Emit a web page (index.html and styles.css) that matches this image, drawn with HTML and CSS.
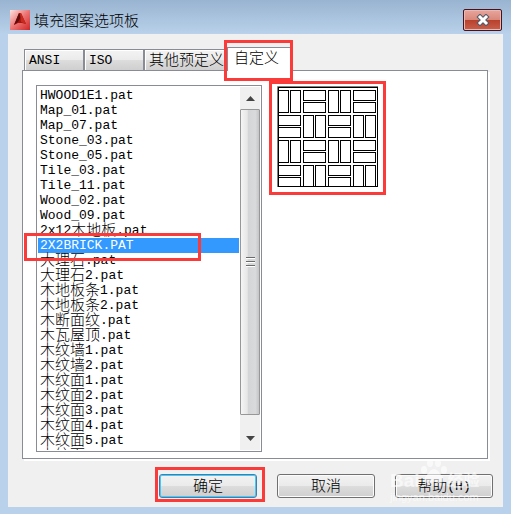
FILE: index.html
```html
<!DOCTYPE html>
<html lang="zh-CN">
<head>
    <meta charset="UTF-8">
    <meta name="viewport" content="width=device-width, initial-scale=1.0">
    <title>填充图案选项板</title>
    <link rel="stylesheet" href="styles.css">
</head>
<body>

    <div class="titlebar">
        <svg class="app-icon" viewBox="0 0 20 20" aria-hidden="true">
            <defs>
                <linearGradient id="iconBg" x1="0" y1="0" x2="1" y2="1">
                    <stop offset="0" stop-color="#fbe4e4"/>
                    <stop offset="0.5" stop-color="#ec7474"/>
                    <stop offset="1" stop-color="#d02424"/>
                </linearGradient>
            </defs>
            <rect width="20" height="20" fill="url(#iconBg)"/>
            <path d="M9 3h2l5 11-4-1H8l-4 2z" fill="#a81410"/>
            <path d="M9 3l-5 12 4-3 3-5z" fill="#5c0d0d"/>
            <path d="M10 3h1l5 11-5-2z" fill="#c82a20"/>
        </svg>
        <h1>填充图案选项板</h1>
        <button type="button" class="close-btn" aria-label="关闭">
            <svg viewBox="0 0 14 12" aria-hidden="true">
                <path d="M4 3l6 6M10 3l-6 6" stroke="#525b6b" stroke-width="5" stroke-linecap="square"/>
                <path d="M4 3l6 6M10 3l-6 6" stroke="#fff" stroke-width="3" stroke-linecap="square"/>
            </svg>
        </button>
    </div>

    <form class="dialog">
        <div class="tabs" role="tablist">
            <button type="button" class="tab" role="tab">ANSI</button>
            <button type="button" class="tab" role="tab">ISO</button>
            <button type="button" class="tab tab-wide" role="tab"><span class="cn">其他预定义</span></button>
            <button type="button" class="tab active marked" role="tab" aria-selected="true"><span class="cn">自定义</span></button>
        </div>

        <div class="panel">
            <div class="listbox">
                <div class="items">
                    <label><input type="radio" name="pat">HWOOD1E1.pat</label>
                    <label><input type="radio" name="pat">Map_01.pat</label>
                    <label><input type="radio" name="pat">Map_07.pat</label>
                    <label><input type="radio" name="pat">Stone_03.pat</label>
                    <label><input type="radio" name="pat">Stone_05.pat</label>
                    <label><input type="radio" name="pat">Tile_03.pat</label>
                    <label><input type="radio" name="pat">Tile_11.pat</label>
                    <label><input type="radio" name="pat">Wood_02.pat</label>
                    <label><input type="radio" name="pat">Wood_09.pat</label>
                    <label><input type="radio" name="pat">2x12<span class="cn">木地板</span>.pat</label>
                    <label><input type="radio" name="pat" checked>2X2BRICK.PAT</label>
                    <label><input type="radio" name="pat"><span class="cn">大理石</span>.pat</label>
                    <label><input type="radio" name="pat"><span class="cn">大理石</span>2.pat</label>
                    <label><input type="radio" name="pat"><span class="cn">木地板条</span>1.pat</label>
                    <label><input type="radio" name="pat"><span class="cn">木地板条</span>2.pat</label>
                    <label><input type="radio" name="pat"><span class="cn">木断面纹</span>.pat</label>
                    <label><input type="radio" name="pat"><span class="cn">木瓦屋顶</span>.pat</label>
                    <label><input type="radio" name="pat"><span class="cn">木纹墙</span>1.pat</label>
                    <label><input type="radio" name="pat"><span class="cn">木纹墙</span>2.pat</label>
                    <label><input type="radio" name="pat"><span class="cn">木纹面</span>1.pat</label>
                    <label><input type="radio" name="pat"><span class="cn">木纹面</span>2.pat</label>
                    <label><input type="radio" name="pat"><span class="cn">木纹面</span>3.pat</label>
                    <label><input type="radio" name="pat"><span class="cn">木纹面</span>4.pat</label>
                    <label><input type="radio" name="pat"><span class="cn">木纹面</span>5.pat</label>
                    <label><input type="radio" name="pat"><span class="cn">木纹面</span>6.pat</label>
                </div>
                <div class="scrollbar">
                    <button type="button" class="arrow" aria-label="向上">
                        <svg viewBox="0 0 9 5" aria-hidden="true"><path d="M0 5L4.500 0 9 5z" fill="#444"/></svg>
                    </button>
                    <div class="thumb"><span class="grip"></span></div>
                    <button type="button" class="arrow" aria-label="向下">
                        <svg viewBox="0 0 9 5" aria-hidden="true"><path d="M0 0h9L4.500 5z" fill="#444"/></svg>
                    </button>
                </div>
                <div class="row-mark"></div>
            </div>

            <div class="preview marked">
                <svg viewBox="0 0 101 101" aria-hidden="true">
                    <defs>
                        <pattern id="brick" x="1" y="4" width="50" height="50" patternUnits="userSpaceOnUse">
                            <g fill="#fff" stroke="#000">
                                <rect x="0.5" y="0.5" width="10" height="22"/>
                                <rect x="12.5" y="0.5" width="10" height="22"/>
                                <rect x="25.5" y="0.5" width="22" height="10"/>
                                <rect x="25.5" y="12.5" width="22" height="10"/>
                                <rect x="0.5" y="25.500" width="22" height="10"/>
                                <rect x="0.5" y="37.500" width="22" height="10"/>
                                <rect x="25.5" y="25.500" width="10" height="22"/>
                                <rect x="37.5" y="25.500" width="10" height="22"/>
                            </g>
                        </pattern>
                    </defs>
                    <rect width="101" height="101" fill="#fff"/>
                    <rect x="1" y="3" width="99" height="97" fill="url(#brick)"/>
                    <path d="M0.5 101V0.500H101" fill="none" stroke="#808080"/>
                    <rect x="1.500" y="1.500" width="99" height="99" fill="none" stroke="#000"/>
                </svg>
            </div>
        </div>

        <div class="actions">
            <button type="submit" class="btn primary marked"><span class="cn">确定</span></button>
            <button type="button" class="btn"><span class="cn">取消</span></button>
            <div class="help">
                <button type="button" class="btn"><span class="cn">帮助</span>(H)</button>
                <div class="watermark">
                    <svg class="paw" viewBox="0 0 28 26" aria-hidden="true">
                        <g fill="#fff">
                            <ellipse cx="4" cy="12" rx="3" ry="4"/>
                            <ellipse cx="10" cy="5" rx="3" ry="4"/>
                            <ellipse cx="18" cy="5" rx="3" ry="4"/>
                            <ellipse cx="24" cy="12" rx="3" ry="4"/>
                            <path d="M14 11c4 0 5 4 8 7s2 7-2 7-4-1-6-1-3 1-6 1-5-4-2-7 4-7 8-7z"/>
                        </g>
                    </svg>
                    <div class="brand"><span>Bai</span><span>经验</span></div>
                    <div class="site">jingyan.baidu.com</div>
                </div>
            </div>
        </div>
    </form>

</body>
</html>
```

FILE: styles.css
```css
:root {
    --frame: #b9d1ea;
    --face: #f0f0f0;
    --line: #898c95;
    --select: #3399ff;
    --mark: #fb3a3a;
}

* {
    margin: 0;
    padding: 0;
    box-sizing: border-box;
}

body {
    background: var(--frame);
    min-height: 100vh;
    padding: 0 8px 7px;
    font-family: "Liberation Mono", "Noto Sans CJK SC", monospace;
    font-size: 13px;
    line-height: 15px;
    color: #000;
    overflow: hidden;
}

button {
    font: inherit;
    color: inherit;
    border: none;
    background: none;
}

.cn {
    font-family: "Noto Sans CJK SC", sans-serif;
    font-size: 15px;
    font-weight: 300;
    line-height: 15px;
}

/* lifts the chinese glyphs onto the latin baseline */
.items .cn,
.btn .cn {
    margin-bottom: 4px;
}

/* title bar */

.titlebar {
    display: flex;
    align-items: center;
    gap: 4px;
    height: 34px;
    margin: 0 -8px;
    padding: 5px 9px 0 10px;
    background: linear-gradient(#99b4d1, #b9d1ea);
}

.app-icon {
    width: 20px;
    height: 20px;
}

.titlebar h1 {
    flex: 1;
    font-family: "Noto Sans CJK SC", sans-serif;
    font-size: 15px;
    font-weight: 300;
    line-height: 20px;
}

.close-btn {
    display: flex;
    align-items: center;
    justify-content: center;
    width: 39px;
    height: 22px;
    border: 1px solid #431422;
    border-radius: 2px;
    background: linear-gradient(#e9a59c 0, #d9887c 48%, #b8402b 50%, #c9604c 100%);
    box-shadow: inset 0 0 0 1px #eab9b2;
}

.close-btn svg {
    width: 14px;
    height: 12px;
}

/* tabs */

.dialog {
    background: var(--face);
    padding: 13px 15px 9px 14px;
}

.tabs {
    display: flex;
    align-items: flex-end;
    padding-left: 2px;
}

.tab {
    width: 60px;
    height: 21px;
    padding-left: 4px;
    text-align: left;
    border: 1px solid var(--line);
    border-bottom: none;
    background: linear-gradient(#f3f3f3 0, #ebebeb 48%, #dddddd 50%, #cfcfcf 100%);
    box-shadow: inset 1px 1px 0 #fff;
}

.tab-wide {
    width: 84px;
    white-space: nowrap;
}

.tab.active {
    position: relative;
    z-index: 1;
    width: 64px;
    height: 24px;
    margin: 0 0 -1px -1px;
    padding: 0 0 3px 6px;
    background: #fff;
}

/* red frames */

.marked {
    position: relative;
}

.marked::after,
.row-mark {
    content: "";
    position: absolute;
    inset: -5px -8px -8px;
    border: 3px solid var(--mark);
    pointer-events: none;
}

.tab.marked::after {
    inset: -8px -3px -10px -4px;
}

.btn.marked::after {
    inset: -8px -9px -5px -5px;
}

.row-mark {
    inset: 147px 60px auto -13px;
    height: 28px;
}

/* panel */

.panel {
    display: flex;
    align-items: flex-start;
    gap: 15px;
    padding: 14px 13px 6px;
    border: 1px solid var(--line);
    background: #fff;
    box-shadow: 2px 2px 0 #fff;
}

.listbox {
    position: relative;
    display: flex;
    flex: 0 0 226px;
    height: 367px;
    padding: 1px;
    border: 1px solid var(--line);
}

.items {
    flex: 1;
    padding-top: 1px;
    overflow: hidden;
}

.items label {
    display: flex;
    align-items: center;
    height: 15px;
    padding-left: 2px;
    white-space: nowrap;
}

.items input {
    position: absolute;
    appearance: none;
}

.items label:has(:checked) {
    background: var(--select);
    color: #fff;
}

.scrollbar {
    display: flex;
    flex-direction: column;
    width: 20px;
    margin-left: 1px;
    background: #f0f0f0;
}

.arrow {
    display: flex;
    align-items: center;
    justify-content: center;
    height: 22px;
}

.arrow:last-child {
    height: 35px;
    padding-top: 12px;
}

.arrow svg {
    width: 9px;
    height: 5px;
}

.thumb {
    display: flex;
    flex: 1;
    align-items: center;
    justify-content: center;
    border: 1px solid #979797;
    border-radius: 1px;
    background: linear-gradient(90deg, #f5f5f5 0, #e6e6e6 35%, #d4d5d7 40%, #d9dadc 80%, #c4c4c6 100%);
}

.grip {
    width: 9px;
    height: 10px;
    background: repeating-linear-gradient(#6a6a6a 0, #6a6a6a 1px, #fff 1px, #fff 2px, transparent 2px, transparent 4px);
}

.preview {
    width: 101px;
    height: 101px;
    margin-top: 1px;
}

.preview svg {
    display: block;
    width: 101px;
    height: 101px;
}

/* bottom buttons */

.actions {
    display: flex;
    justify-content: flex-end;
    gap: 20px;
    margin-right: -5px;
    padding-top: 15px;
}

.btn {
    display: flex;
    align-items: center;
    justify-content: center;
    width: 98px;
    height: 24px;
    border: 1px solid #707070;
    border-radius: 3px;
    background: linear-gradient(#f2f2f2 0, #ebebeb 48%, #dddddd 50%, #cfcfcf 100%);
    box-shadow: inset 0 0 0 1px #fcfcfc;
}

.btn.primary {
    border-color: #3c7fb1;
    box-shadow: inset 0 0 0 1px #48c9f5;
}

.help {
    position: relative;
}

.watermark {
    position: absolute;
    top: -16px;
    left: -5px;
    color: #fff;
    opacity: 0.6;
    font-family: "Liberation Sans", "Noto Sans CJK SC", sans-serif;
    pointer-events: none;
}

.paw {
    position: absolute;
    left: 30px;
    width: 28px;
    height: 26px;
}

.brand {
    display: flex;
    gap: 28px;
    padding-top: 14px;
    font-size: 19px;
    font-weight: bold;
    line-height: 18px;
}

.brand span:last-child {
    font-size: 16px;
}

.site {
    font-size: 11px;
    line-height: 14px;
}
```
